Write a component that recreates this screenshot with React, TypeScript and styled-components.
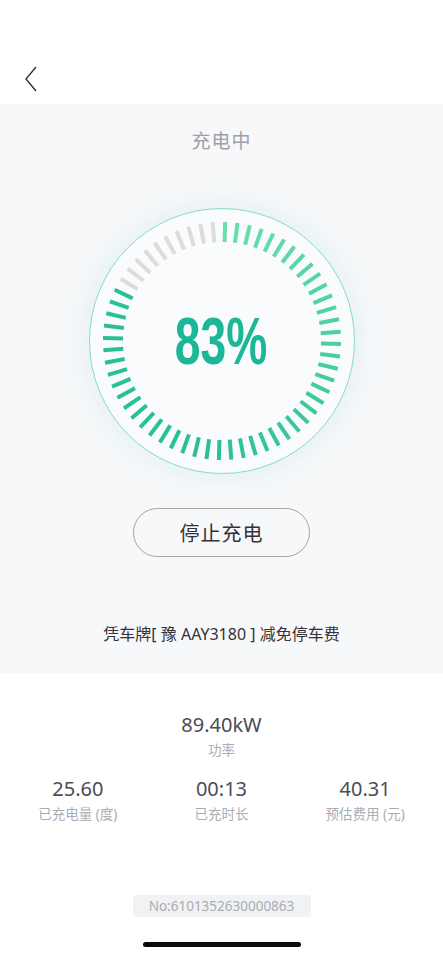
import React from "react";
import styled, { createGlobalStyle } from "styled-components";

const Global = createGlobalStyle`
  html, body { margin: 0; padding: 0; background: #ffffff; }
  body { font-family: "Noto Sans", "Noto Sans CJK SC", sans-serif; -webkit-font-smoothing: antialiased; }
  * { box-sizing: border-box; }
`;

const Page = styled.div`
  width: 443px;
  height: 960px;
  overflow: hidden;
  display: flex;
  flex-direction: column;
  background: #ffffff;
`;

const NavBar = styled.div`
  height: 104px;
  display: flex;
  align-items: flex-start;
  padding: 63px 0 0 20px;
`;

const BackButton = styled.button`
  width: 22px;
  height: 32px;
  border: 0;
  padding: 0;
  background: transparent;
  display: flex;
  align-items: center;
  justify-content: center;
`;

const StatusSection = styled.section`
  background: #f7f8fa;
  display: flex;
  flex-direction: column;
  align-items: center;
  padding: 23px 0 28px;
`;

const Title = styled.div`
  font-family: "Noto Sans CJK SC", sans-serif;
  font-size: 19px;
  line-height: 26px;
  color: #9da0a8;
  letter-spacing: 1px;
`;

const RingOuter = styled.div`
  margin-top: 55px;
  width: 266px;
  height: 266px;
  border-radius: 50%;
  border: 1px solid #86dcc9;
  background: #f9fbfc;
  box-shadow: 0 0 26px 6px rgba(150, 215, 205, 0.18);
  position: relative;
  display: flex;
  align-items: center;
  justify-content: center;
`;

const TickLayer = styled.svg`
  position: absolute;
  left: -1px;
  top: -1px;
  width: 266px;
  height: 266px;
`;

const Percent = styled.div`
  position: relative;
  font-family: "Liberation Sans", Arial, sans-serif;
  font-weight: 700;
  font-size: 66px;
  line-height: 66px;
  color: #1bb796;
  transform: scaleX(0.7);
  letter-spacing: 0;
`;

const StopButton = styled.button`
  margin-top: 34px;
  width: 177px;
  height: 49px;
  border-radius: 25px;
  border: 1px solid #a3a3a6;
  background: transparent;
  font-family: "Noto Sans CJK SC", sans-serif;
  font-size: 20px;
  color: #333338;
  letter-spacing: 1px;
  display: flex;
  align-items: center;
  justify-content: center;
`;

const PlateNote = styled.div`
  margin-top: 66px;
  font-family: "Noto Sans", "Noto Sans CJK SC", sans-serif;
  font-size: 16px;
  line-height: 22px;
  color: #333338;
`;

const StatsSection = styled.section`
  flex: 1;
  display: flex;
  flex-direction: column;
  align-items: center;
  padding-top: 39px;
`;

const Stat = styled.div`
  display: flex;
  flex-direction: column;
  align-items: center;
  gap: 3px;
`;

const StatValue = styled.div`
  font-family: "Noto Sans", "Noto Sans CJK SC", sans-serif;
  font-size: 20px;
  line-height: 26px;
  color: #4a4c58;
`;

const StatLabel = styled.div`
  font-family: "Noto Sans", "Noto Sans CJK SC", sans-serif;
  font-size: 13.5px;
  line-height: 18px;
  color: #a9acb3;
`;

const StatRow = styled.div`
  margin-top: 17px;
  width: 100%;
  padding: 0 6px;
  display: grid;
  grid-template-columns: repeat(3, 1fr);
`;

const SerialPill = styled.div`
  margin-top: 72px;
  width: 178px;
  height: 22px;
  border-radius: 3px;
  background: #f1f2f4;
  display: flex;
  align-items: center;
  justify-content: center;
  font-family: "Noto Sans", sans-serif;
  font-size: 13.5px;
  color: #a9acb3;
`;

const HomeIndicator = styled.div`
  margin-top: 25px;
  width: 158px;
  height: 5px;
  border-radius: 3px;
  background: #0a0a0a;
`;

const TOTAL = 60;
const GREEN = 50;

function tickColor(i: number): string {
  if (i >= GREEN) return "#dcdcdc";
  const t = i / (GREEN - 1);
  const a = [106, 222, 172];
  const b = [42, 192, 150];
  const k = Math.min(1, t * 1.6);
  const c = a.map((v, j) => Math.round(v + (b[j] - v) * k));
  return `rgb(${c[0]},${c[1]},${c[2]})`;
}

function Ticks() {
  const cx = 133;
  const cy = 133;
  const r1 = 99;
  const r2 = 119;
  const items = [];
  for (let i = 0; i < TOTAL; i++) {
    const deg = i * 6 + 1.5;
    const rad = (deg * Math.PI) / 180;
    const s = Math.sin(rad);
    const c = Math.cos(rad);
    items.push(
      <line
        key={i}
        x1={cx + s * r1}
        y1={cy - c * r1}
        x2={cx + s * r2}
        y2={cy - c * r2}
        stroke={tickColor(i)}
        strokeWidth={4}
      />
    );
  }
  return <TickLayer viewBox="0 0 266 266">{items}</TickLayer>;
}

export default function App() {
  return (
    <Page>
      <Global />
      <NavBar>
        <BackButton aria-label="back">
          <svg width="16" height="28" viewBox="0 0 16 28">
            <path d="M13 2 L3 14 L13 26" fill="none" stroke="#333" strokeWidth="1.4" />
          </svg>
        </BackButton>
      </NavBar>
      <StatusSection>
        <Title>充电中</Title>
        <RingOuter>
          <Ticks />
          <Percent>83%</Percent>
        </RingOuter>
        <StopButton>停止充电</StopButton>
        <PlateNote>凭车牌[ 豫 AAY3180 ] 减免停车费</PlateNote>
      </StatusSection>
      <StatsSection>
        <Stat>
          <StatValue>89.40kW</StatValue>
          <StatLabel>功率</StatLabel>
        </Stat>
        <StatRow>
          <Stat>
            <StatValue>25.60</StatValue>
            <StatLabel>已充电量 (度)</StatLabel>
          </Stat>
          <Stat>
            <StatValue>00:13</StatValue>
            <StatLabel>已充时长</StatLabel>
          </Stat>
          <Stat>
            <StatValue>40.31</StatValue>
            <StatLabel>预估费用 (元)</StatLabel>
          </Stat>
        </StatRow>
        <SerialPill>No:6101352630000863</SerialPill>
        <HomeIndicator />
      </StatsSection>
    </Page>
  );
}
